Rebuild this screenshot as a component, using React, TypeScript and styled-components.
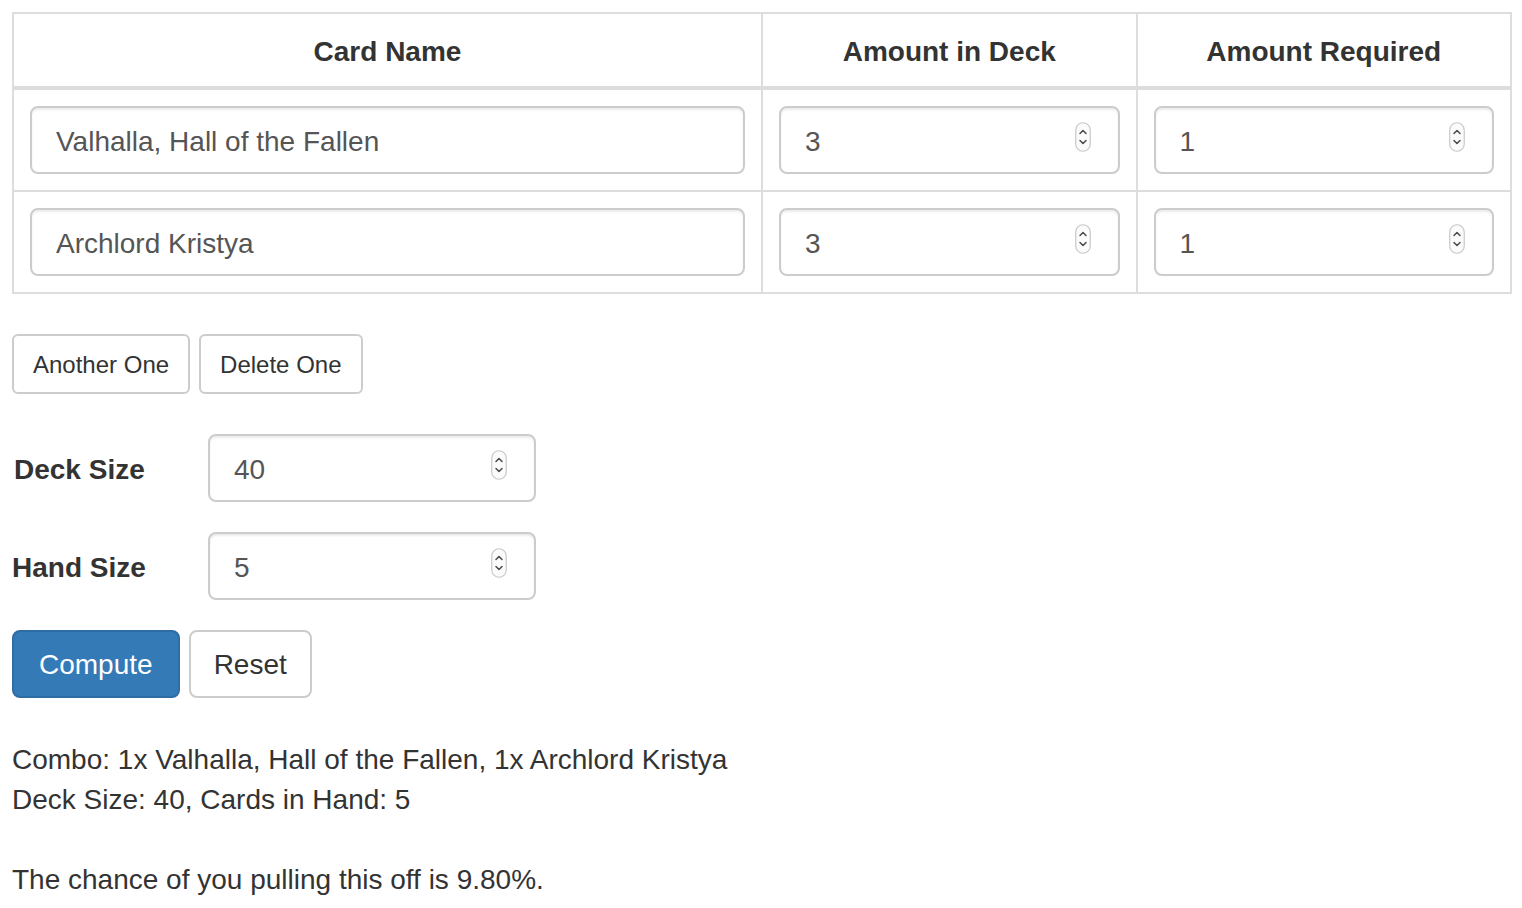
import React from "react";
import styled, { createGlobalStyle } from "styled-components";

const GlobalStyle = createGlobalStyle`
  * { box-sizing: border-box; }
  html, body { margin: 0; padding: 0; background: #fff; }
  body {
    font-family: "Liberation Sans", Arial, sans-serif;
    font-size: 28px;
    line-height: 40px;
    color: #333;
  }
`;

const Page = styled.div`
  padding: 12px 10px 12px 12px;
`;

const Table = styled.table`
  width: 1500px;
  border-collapse: collapse;
  border: 2px solid #ddd;
  table-layout: fixed;
`;

const Th = styled.th`
  padding: 18px 16px 14px;
  font-weight: bold;
  text-align: center;
  border: 2px solid #ddd;
  border-bottom: 4px solid #ddd;
  color: #333;
`;

const Td = styled.td`
  padding: 16px;
  border: 2px solid #ddd;
`;

const TextInput = styled.input`
  display: block;
  width: 100%;
  height: 68px;
  padding: 14px 24px 10px;
  font: inherit;
  font-size: 28px;
  color: #555;
  background: #fff;
  border: 2px solid #ccc;
  border-radius: 8px;
  box-shadow: inset 0 2px 2px rgba(0, 0, 0, 0.075);
  outline: none;
`;

const NumberField = styled.div<{ $width?: number }>`
  display: flex;
  align-items: center;
  width: ${(p) => (p.$width ? `${p.$width}px` : "100%")};
  height: 68px;
  padding: 0 27px 0 24px;
  background: #fff;
  border: 2px solid #ccc;
  border-radius: 8px;
  box-shadow: inset 0 2px 2px rgba(0, 0, 0, 0.075);
`;

const NumberValue = styled.input`
  flex: 1;
  min-width: 0;
  border: none;
  outline: none;
  padding: 4px 0 0;
  background: transparent;
  font: inherit;
  font-size: 28px;
  color: #555;
`;

const SpinnerSvg = styled.svg`
  flex: none;
  margin-top: -6px;
`;

const Spinner = () => (
  <SpinnerSvg width="16" height="30" viewBox="0 0 16 30">
    <rect x="0.75" y="0.75" width="14.5" height="28.5" rx="7.25" fill="#fbfbfb" stroke="#c8c8c8" strokeWidth="1.2" />
    <path d="M5 11.5 L8 8.5 L11 11.5" fill="none" stroke="#4a4a4a" strokeWidth="1.5" strokeLinecap="round" strokeLinejoin="round" />
    <path d="M5 18.5 L8 21.5 L11 18.5" fill="none" stroke="#4a4a4a" strokeWidth="1.5" strokeLinecap="round" strokeLinejoin="round" />
  </SpinnerSvg>
);

const NumberInput = ({ value, width }: { value: string; width?: number }) => (
  <NumberField $width={width}>
    <NumberValue type="text" defaultValue={value} />
    <Spinner />
  </NumberField>
);

const ButtonRow = styled.div<{ $mt: number }>`
  display: flex;
  gap: 9px;
  margin-top: ${(p) => p.$mt}px;
`;

const Button = styled.button<{ $size?: "sm" | "md"; $primary?: boolean }>`
  font-family: "Liberation Sans", Arial, sans-serif;
  font-size: ${(p) => (p.$size === "sm" ? 24 : 28)}px;
  line-height: ${(p) => (p.$size === "sm" ? 36 : 40)}px;
  padding: ${(p) =>
    p.$size === "sm" ? "11px 19px 9px" : p.$primary ? "13px 25px 11px" : "13px 23px 11px"};
  border-radius: ${(p) => (p.$size === "sm" ? 6 : 8)}px;
  border: 2px solid ${(p) => (p.$primary ? "#2e6da4" : "#ccc")};
  background: ${(p) => (p.$primary ? "#337ab7" : "#fff")};
  color: ${(p) => (p.$primary ? "#fff" : "#333")};
  cursor: pointer;
  white-space: nowrap;
`;

const FormRow = styled.div<{ $mt: number }>`
  display: grid;
  grid-template-columns: 196px 328px;
  align-items: center;
  margin-top: ${(p) => p.$mt}px;
`;

const Label = styled.label<{ $nudge?: number }>`
  font-weight: bold;
  font-size: 28px;
  color: #333;
  padding-top: 3px;
  padding-left: ${(p) => p.$nudge ?? 0}px;
`;

const Result = styled.div`
  margin-top: 42px;
  font-size: 28px;
  line-height: 40px;
  color: #333;
`;

const Line = styled.div`
  height: 40px;
  white-space: nowrap;
`;

export default function App() {
  return (
    <>
      <GlobalStyle />
      <Page>
        <Table>
          <colgroup>
            <col style={{ width: "50%" }} />
            <col style={{ width: "25%" }} />
            <col style={{ width: "25%" }} />
          </colgroup>
          <thead>
            <tr>
              <Th>Card Name</Th>
              <Th>Amount in Deck</Th>
              <Th>Amount Required</Th>
            </tr>
          </thead>
          <tbody>
            <tr>
              <Td><TextInput defaultValue="Valhalla, Hall of the Fallen" /></Td>
              <Td><NumberInput value="3" /></Td>
              <Td><NumberInput value="1" /></Td>
            </tr>
            <tr>
              <Td><TextInput defaultValue="Archlord Kristya" /></Td>
              <Td><NumberInput value="3" /></Td>
              <Td><NumberInput value="1" /></Td>
            </tr>
          </tbody>
        </Table>

        <ButtonRow $mt={40}>
          <Button $size="sm">Another One</Button>
          <Button $size="sm">Delete One</Button>
        </ButtonRow>

        <FormRow $mt={40}>
          <Label $nudge={2}>Deck Size</Label>
          <NumberInput value="40" width={328} />
        </FormRow>

        <FormRow $mt={30}>
          <Label>Hand Size</Label>
          <NumberInput value="5" width={328} />
        </FormRow>

        <ButtonRow $mt={30}>
          <Button $primary>Compute</Button>
          <Button>Reset</Button>
        </ButtonRow>

        <Result>
          <Line>Combo: 1x Valhalla, Hall of the Fallen, 1x Archlord Kristya</Line>
          <Line>Deck Size: 40, Cards in Hand: 5</Line>
          <Line />
          <Line>The chance of you pulling this off is 9.80%.</Line>
        </Result>
      </Page>
    </>
  );
}
